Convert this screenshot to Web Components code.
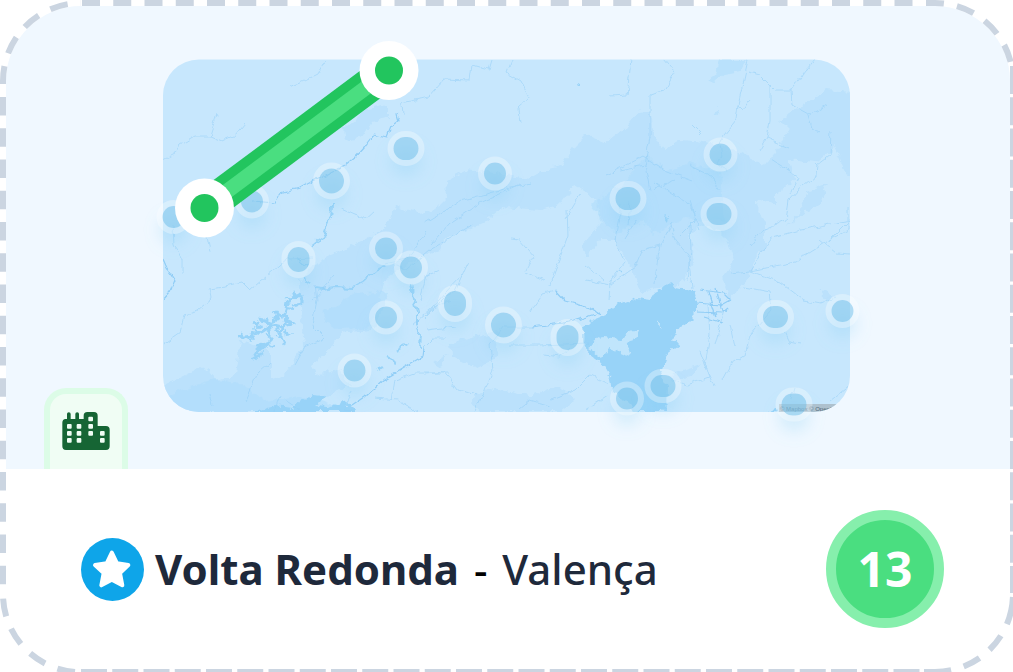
<!DOCTYPE html>
<html lang="pt-BR">
<head>
<meta charset="utf-8">
<meta name="viewport" content="width=device-width, initial-scale=1">
<title>Volta Redonda - Valença</title>
<style>
body { margin: 0; background: #fff; font-family: "Noto Sans", "Open Sans", sans-serif; }
</style>
</head>
<body>
<route-card>
  <route-map slot="map"></route-map>
  <city-tag slot="tag"></city-tag>
  <route-title slot="title"><span slot="from">Volta Redonda</span><span slot="to">Valença</span></route-title>
  <route-score slot="score">13</route-score>
</route-card>

<template id="route-card">
  <style>
    :host { display: flex; flex-direction: column; position: relative; box-sizing: border-box; min-height: 100vh; padding: 6px 3px 3px 6px; overflow: hidden; }
    .hero { position: relative; background: #f0f8ff; border-radius: 75px 75px 0 0; }
    ::slotted(city-tag) { position: absolute; left: 38px; bottom: 0; }
    footer { flex: 1; display: flex; align-items: center; justify-content: space-between; gap: 24px; padding: 40px 66px 40px 75px; }
    dashed-frame { position: absolute; inset: 0; }
  </style>
  <div class="hero"><slot name="map"></slot><slot name="tag"></slot></div>
  <footer><slot name="title"></slot><slot name="score"></slot></footer>
  <dashed-frame></dashed-frame>
</template>

<template id="dashed-frame">
  <style>
    :host { display: block; pointer-events: none; }
    svg { display: block; width: 100%; height: 100%; }
    path { fill: none; stroke: #cbd5e1; stroke-width: 6; }
  </style>
  <svg aria-hidden="true"></svg>
</template>

<template id="city-tag">
  <style>
    :host { display: block; box-sizing: border-box; width: 84px; height: 81px; padding: 18px 12px; border: 6px solid #dcfce7; border-bottom: 0; border-radius: 22px 22px 0 0; background: #f0fdf4; }
    svg { display: block; width: 48px; height: 38px; }
  </style>
  <svg viewBox="0 0 142 114" role="img" aria-label="Cidade">
    <path fill="#166534" d="M10 21H14V6a5.500 5.500 0 0 1 11 0V21H39V6a5.500 5.500 0 0 1 11 0V21H64V11A11 11 0 0 1 75 0H95A11 11 0 0 1 106 11V42H131A11 11 0 0 1 142 53V103A11 11 0 0 1 131 114H11A11 11 0 0 1 0 103V32A11 11 0 0 1 10 21Z"/>
    <g fill="#f0fdf4">
      <rect x="14" y="36" width="14" height="14" rx="3"/><rect x="43" y="36" width="14" height="14" rx="3"/>
      <rect x="14" y="57" width="14" height="14" rx="3"/><rect x="43" y="57" width="14" height="14" rx="3"/>
      <rect x="14" y="78" width="14" height="14" rx="3"/><rect x="43" y="78" width="14" height="14" rx="3"/>
      <rect x="78" y="14" width="14" height="14" rx="3"/><rect x="78" y="36" width="14" height="14" rx="3"/><rect x="78" y="57" width="14" height="14" rx="3"/>
      <rect x="113" y="57" width="14" height="14" rx="3"/><rect x="113" y="78" width="14" height="14" rx="3"/>
    </g>
  </svg>
</template>

<template id="route-title">
  <style>
    :host { display: flex; align-items: center; gap: 11px; color: #1e293b; }
    svg { display: block; flex: none; width: 63px; height: 63px; }
    h2 { margin: 0; font-size: 42px; line-height: 60px; font-weight: 500; }
    b { font-weight: 700; }
    i { padding: 0 4px; font-style: normal; color: #000; }
  </style>
  <svg viewBox="0 0 189 189" aria-hidden="true">
    <circle cx="94.500" cy="94.500" r="94.500" fill="#0ea5e9"/>
    <path fill="#fff" stroke="#fff" stroke-width="12" stroke-linejoin="round" d="M92.500 44L108 76L142 81L117 105L124 142L92.500 125L61 142L68 105L42 81L77 76Z"/>
  </svg>
  <h2><b><slot name="from"></slot></b><i> - </i><slot name="to"></slot></h2>
</template>

<template id="route-score">
  <style>
    :host { display: flex; flex: none; align-items: center; justify-content: center; box-sizing: border-box; width: 118px; height: 118px; border: 10px solid #86efac; border-radius: 50%; background: #4ade80; color: #fff; font-size: 48px; line-height: 60px; font-weight: 700; }
  </style>
  <slot></slot>
</template>

<template id="route-map">
  <style>
    :host { display: block; }
    svg { display: block; width: 100%; height: auto; }
    .line { fill: none; stroke: #90cdf6; stroke-linejoin: round; }
    .pin { fill: #88c9ed; fill-opacity: .6; }
    .ring { fill: none; stroke: #fff; stroke-opacity: .32; stroke-width: 6; }
    text { font: 6px "Liberation Sans", sans-serif; fill: #4f6878; }
  </style>
  <svg viewBox="6 6 1004 463" role="img" aria-label="Mapa da rota">
    <defs>
      <clipPath id="frame"><rect x="163" y="59.500" width="687" height="352.500" rx="36"/></clipPath>
      <filter id="rough" filterUnits="userSpaceOnUse" x="150" y="40" width="720" height="390">
        <feTurbulence type="fractalNoise" baseFrequency=".12" numOctaves="3" seed="4"/>
        <feDisplacementMap in="SourceGraphic" scale="9" xChannelSelector="R" yChannelSelector="G"/>
      </filter>
      <filter id="wander" filterUnits="userSpaceOnUse" x="150" y="40" width="720" height="390">
        <feTurbulence type="fractalNoise" baseFrequency=".12" numOctaves="2" seed="4"/>
        <feDisplacementMap in="SourceGraphic" scale="6" xChannelSelector="R" yChannelSelector="G"/>
      </filter>
      <filter id="soft" x="-100%" y="-100%" width="300%" height="300%"><feGaussianBlur stdDeviation="8"/></filter>
    </defs>
    <g clip-path="url(#frame)">
      <rect x="163" y="59" width="687" height="354" fill="#c7e7fd"/>
      <g filter="url(#rough)">
        <path fill="#bbe1fc" d="M300 280L318 262L350 247L372 235L387 226L395 206L420 213L435 210L447 198L446 180L465 170L495 173L530 178L548 168L562 165L575 145L585 135L605 143L625 128L640 110L650 110L655 137L664 150L680 140L705 142L735 150L765 165L790 130L780 120L800 108L825 90L855 92L855 185L845 170L835 147L815 163L790 160L795 180L775 195L775 205L755 200L765 225L765 250L755 257L748 278L730 300L722 277L735 260L727 240L715 228L700 225L690 235L695 260L680 285L640 292L630 265L615 240L600 240L585 258L582 245L600 225L598 200L575 185L560 205L540 210L505 207L480 225L445 239L440 250L410 262L385 280L370 330L340 333L330 350L312 365L315 375L340 370L350 385L330 395L270 412L155 412L165 385L205 365L215 380L235 375L240 340L270 350L270 380L285 375L305 345L300 300Z"/>
        <path fill="#bbe1fc" d="M343 130L358 118L367 108L388 104L388 118L372 121L362 137L345 141ZM786 226L800 213L806 192L828 184L820 202L802 215ZM820 287L832 295L828 303ZM450 343L500 330L495 360L478 368L452 357ZM433 362l14-7-6 12zM470 400L490 388L530 396L560 385L575 400L560 412L480 412ZM674 372l27-8-10 13-18 4z"/>
        <path fill="#addcfb" opacity=".55" d="M720 60h28l-8 12-15 3-10 7-6-2 8-6zM713 114l6-6-1 7zM325 312l30-18 35-3-14 36-38 2-14-7zM590 205l32-20 25-30 18 15 25-7 30 10 4 48-40-3-30 16-12-12-28 12zM165 395l50-16 30 7 20 15 40-6 30 9v8H165z"/>
        <path fill="#98d3f8" d="M583 330L593 320L605 315L612 307L637 298L650 300L655 292L665 287L670 282L678 287L693 290L696 301L696 314L687 323L677 330L672 338L678 345L667 353L663 366L660 374L667 387L666 407L658 412L635 412L620 397L611 386L610 377L602 363L588 353L583 343Z"/>
        <path fill="#c7e7fd" opacity=".85" d="M587 347L603 337L622 339L627 333L638 330L633 338L627 347L630 357L623 353L610 348L602 358ZM657 323l3-4v8z"/>
        <path fill="#98d3f8" d="M253 412L275 406L293 408L302 400L313 394L325 395L320 402L315 406L330 407L342 401L350 407L362 412ZM648 408l18-8 1 10zM767 412l8-4 4 4zM664 217l4-1-1 5zM620 270l3 1-1 3zM577 82l3 1-2 3z"/>
        <g fill="none" stroke="#98d3f8" stroke-linejoin="bevel">
          <path stroke-width="3" d="M238 337L252 335L262 331L270 326L276 316L285 315L287 305L292 297L302 295L302 303L292 305M258 320L266 321L273 325L281 327L294 323L285 319M281 327L280 335L287 342L282 346M270 326L270 342L258 350L252 359M263 353l-8 4M297 294l-7 2M274 311l5 7M261 327l-8-4M284 331l6 5"/>
          <path stroke-width="2" d="M244 337l-3-4M248 336l2 5M257 333l-2-5M266 329l4 4M271 322l-5-4M277 318l-3-7M283 316l6 3M287 308l7 1M290 300l-5-2M299 297l2-4M276 327l2 7M280 338l-5-1M285 326l3-7M270 336l-5-2M269 343l6 2M261 348l-5-2M255 355l6 3"/>
          <path stroke-width="2" d="M332 205L331 218L326 230L323 238L317 242L311 247M315 288L322 289L336 287L352 288L365 280L379 268L385 265M411 284L414 300L417 312L417 325L421 336L420 348M296 258l12 8M305 275l4 10M396 351l12-7M388 358l8 4M378 370l5-3"/>
        </g>
      </g>
      <g class="line" filter="url(#wander)">
        <path stroke-width="1.200" d="M163 259L167 268L175 280L170 292L163 300M252 201L275 203L283 192L300 188L313 181L326 175L345 165L355 157L364 147L374 134L387 137L391 127L399 121L397 114M424 347L423 356L400 370L385 379L365 397L352 406M532 327L570 322L595 314M555 290L565 301L590 308L600 315M696 303l25 2 9-5M700 290l24 3 6 6M697 312l25 1 6-5M703 317l20 6M708 292l8 25M716 288l6 24"/>
        <g stroke-width="1" opacity=".5">
          <path d="M163 160L175 154L181 145L196 136L210 136L217 114M210 136L222 141L235 135L244 124M290 87L302 82L318 74L325 61M403 115L402 103L428 97L443 80L470 81L472 65L489 70L492 60M512 60L507 73L521 81L529 98L518 108L520 123M631 60L627 95L611 96M664 60L674 72L664 90L650 95L650 137L645 165L620 170M748 61L738 105L736 120L724 135L718 145M749 72L760 75L775 90L791 90L814 60M791 90L792 105L810 115L828 105M770 85L770 120L767 138L760 150M767 138L790 148M738 105L743 110L750 100M808 115L812 128L820 133M831 131L830 155L817 165L816 175L798 190L789 200L786 220L763 230L750 246M771 160L798 177L790 194M163 345L180 333L184 315L198 310L212 298L210 288L225 286L242 282L250 290L272 272L287 259L313 258M173 225L174 245L182 260L182 273M207 237l3 14M315 285L317 300L312 325L325 338M325 338L305 347L295 365M335 275L313 300M395 264L407 270L430 250L450 238L472 225M385 263L407 258L427 232M430 245L450 223L480 203L520 185M425 223L460 201L500 190L530 184M424 318L445 297L455 292L468 263M412 325L430 310L450 300M427 330L455 326M427 314L445 293L462 275M510 239L519 240L534 257L526 273L544 281M567 210L568 235L558 263L550 285M621 205L615 240L625 263L610 282L609 300M586 280L610 285L635 267L642 250L660 245L673 222M637 220L625 240M586 265l18 15M660 245L656 270L655 285M690 225L691 250L687 280M505 326L490 345L493 370L485 390L475 411M545 355L560 357L570 348M550 400L575 390L590 375L608 384M424 374L445 372L458 390L478 395M520 408L530 400L550 406M608 395L585 410M670 226L675 240L688 255L692 288M750 271L760 255L772 238L800 230L850 220M750 271L795 262L830 240L850 220M730 273L750 271L780 282L805 301L821 304L835 298M744 287L770 292L772 310L750 335L745 355L730 365L722 380M785 332L790 342L800 344M708 305L710 335L705 365L715 386M730 325L735 347M724 310L715 345M820 240L836 253L850 254M700 350L710 377L687 385L674 380M848 208L848 230L829 240M794 388L790 402M850 385L830 401M352 390L345 410L375 415M392 400L395 380L415 373L450 373M375 398L398 400L418 412"/>
          <path d="M532 327L505 327M555 290L544 293L530 312M510 345L540 345L587 343M424 347L433 338L445 338M605 176L620 168L643 156L665 170L692 180M630 200L628 225M645 165L650 190L675 180M655 182L690 205L700 230M565 220L580 195M720 145L722 155L718 165L728 170M692 125L702 135M689 165L710 175L720 190M680 235L695 220L690 200M245 400L257 375L270 363M275 411L280 395M213 406l-3-13M300 410L285 400M440 270L426 276L420 300M341 209L355 215L365 219L374 211"/>
        </g>
      </g>
      <rect x="779" y="404" width="72" height="9" fill="#a8b8c2" opacity=".8"/>
      <text x="780" y="411">© Mapbox © OpenStreetMap</text>
    </g>
    <g id="pins"></g>
    <path fill="none" stroke="#22c55e" stroke-width="34" d="M204.500 208L389 70.500"/>
    <path fill="none" stroke="#4ade80" stroke-width="15" d="M204.500 208L389 70.500"/>
    <g fill="#fff"><circle cx="204.500" cy="208" r="29.500"/><circle cx="389" cy="70.500" r="29.500"/></g>
    <g fill="#22c55e"><circle cx="204.500" cy="208" r="14"/><circle cx="389" cy="70.500" r="14"/></g>
  </svg>
</template>

<script>
const SVG = "http://www.w3.org/2000/svg";

class TemplateElement extends HTMLElement {
  constructor() {
    super();
    this.attachShadow({ mode: "open" }).append(
      document.getElementById(this.localName).content.cloneNode(true));
  }
}

// City pins: centre x, centre y, ring width, ring height.
const PINS = [
  [406, 148.5, 31, 29], [495, 173.5, 28, 28], [331.5, 181, 31, 31], [628, 198.5, 31, 29],
  [720.5, 154.5, 28, 28], [719, 214, 31, 28], [298.5, 259.5, 28, 31], [386, 248.5, 28, 28],
  [411, 267.5, 28, 28], [386, 317.5, 28, 28], [354.5, 370.5, 28, 28], [455, 303.5, 28, 31],
  [503.5, 325, 31, 31], [567.5, 337.5, 28, 31], [627, 398.5, 28, 28], [663, 386, 31, 28],
  [775.5, 317, 31, 28], [842.5, 311, 28, 28], [794, 404.5, 31, 28], [173.5, 217, 28, 28],
  [252, 201.5, 28, 28]
];

class RouteMap extends TemplateElement {
  constructor() {
    super();
    const layer = this.shadowRoot.getElementById("pins");
    const pill = (x, y, w, h, attributes) => {
      const r = document.createElementNS(SVG, "rect");
      Object.entries({ x: x - w / 2, y: y - h / 2, width: w, height: h, rx: Math.min(w, h) / 2, ...attributes })
        .forEach(([name, value]) => r.setAttribute(name, value));
      layer.append(r);
    };
    for (const [x, y, w, h] of PINS) {
      pill(x, y + 13, w, h, { fill: "#7dcdf5", "fill-opacity": ".25", filter: "url(#soft)" });
      pill(x, y, w - 6, h - 6, { class: "pin" });
      pill(x, y, w, h, { class: "ring" });
    }
  }
}

// Dashed outline whose right and bottom edges run off the card by half their thickness.
class DashedFrame extends TemplateElement {
  connectedCallback() {
    this.observer = new ResizeObserver(() => this.draw());
    this.observer.observe(this);
    this.draw();
  }
  disconnectedCallback() { this.observer.disconnect(); }
  draw() {
    const w = this.clientWidth, h = this.clientHeight, r = 78;
    const right = w - r, bottom = h - r;
    const parts = [
      [`M82 3H${right - 10}`, "18 13.25"],
      [`M3 97V${bottom - 8}`, "18.500 12.750"],
      [`M${w} 66V${bottom - 1}`, "28 3.250"],
      [`M81 ${h}H${right - 14}`, "26 5.250"],
      [`M3 84V81A${r} ${r} 0 0 1 81 3`, "18 13.300"],
      [`M${right - 9} 3H${right}A${r} ${r} 0 0 1 ${w} 81`, "18 13.300 18 13.300 18 13.300 18 100"],
      [`M${w} ${bottom}A${r} ${r} 0 0 1 ${right} ${h}H${right - 11}`, "0 3 28 13 18 13 18 13 30 13"],
      [`M75 ${h}A${r} ${r} 0 0 1 3 ${bottom}`, "18 13.300"]
    ];
    this.shadowRoot.querySelector("svg").replaceChildren(...parts.map(([d, dash]) => {
      const p = document.createElementNS(SVG, "path");
      p.setAttribute("d", d);
      p.setAttribute("stroke-dasharray", dash);
      return p;
    }));
  }
}

customElements.define("dashed-frame", DashedFrame);
customElements.define("route-map", RouteMap);
customElements.define("city-tag", class extends TemplateElement {});
customElements.define("route-title", class extends TemplateElement {});
customElements.define("route-score", class extends TemplateElement {});
customElements.define("route-card", class extends TemplateElement {});
</script>
</body>
</html>
